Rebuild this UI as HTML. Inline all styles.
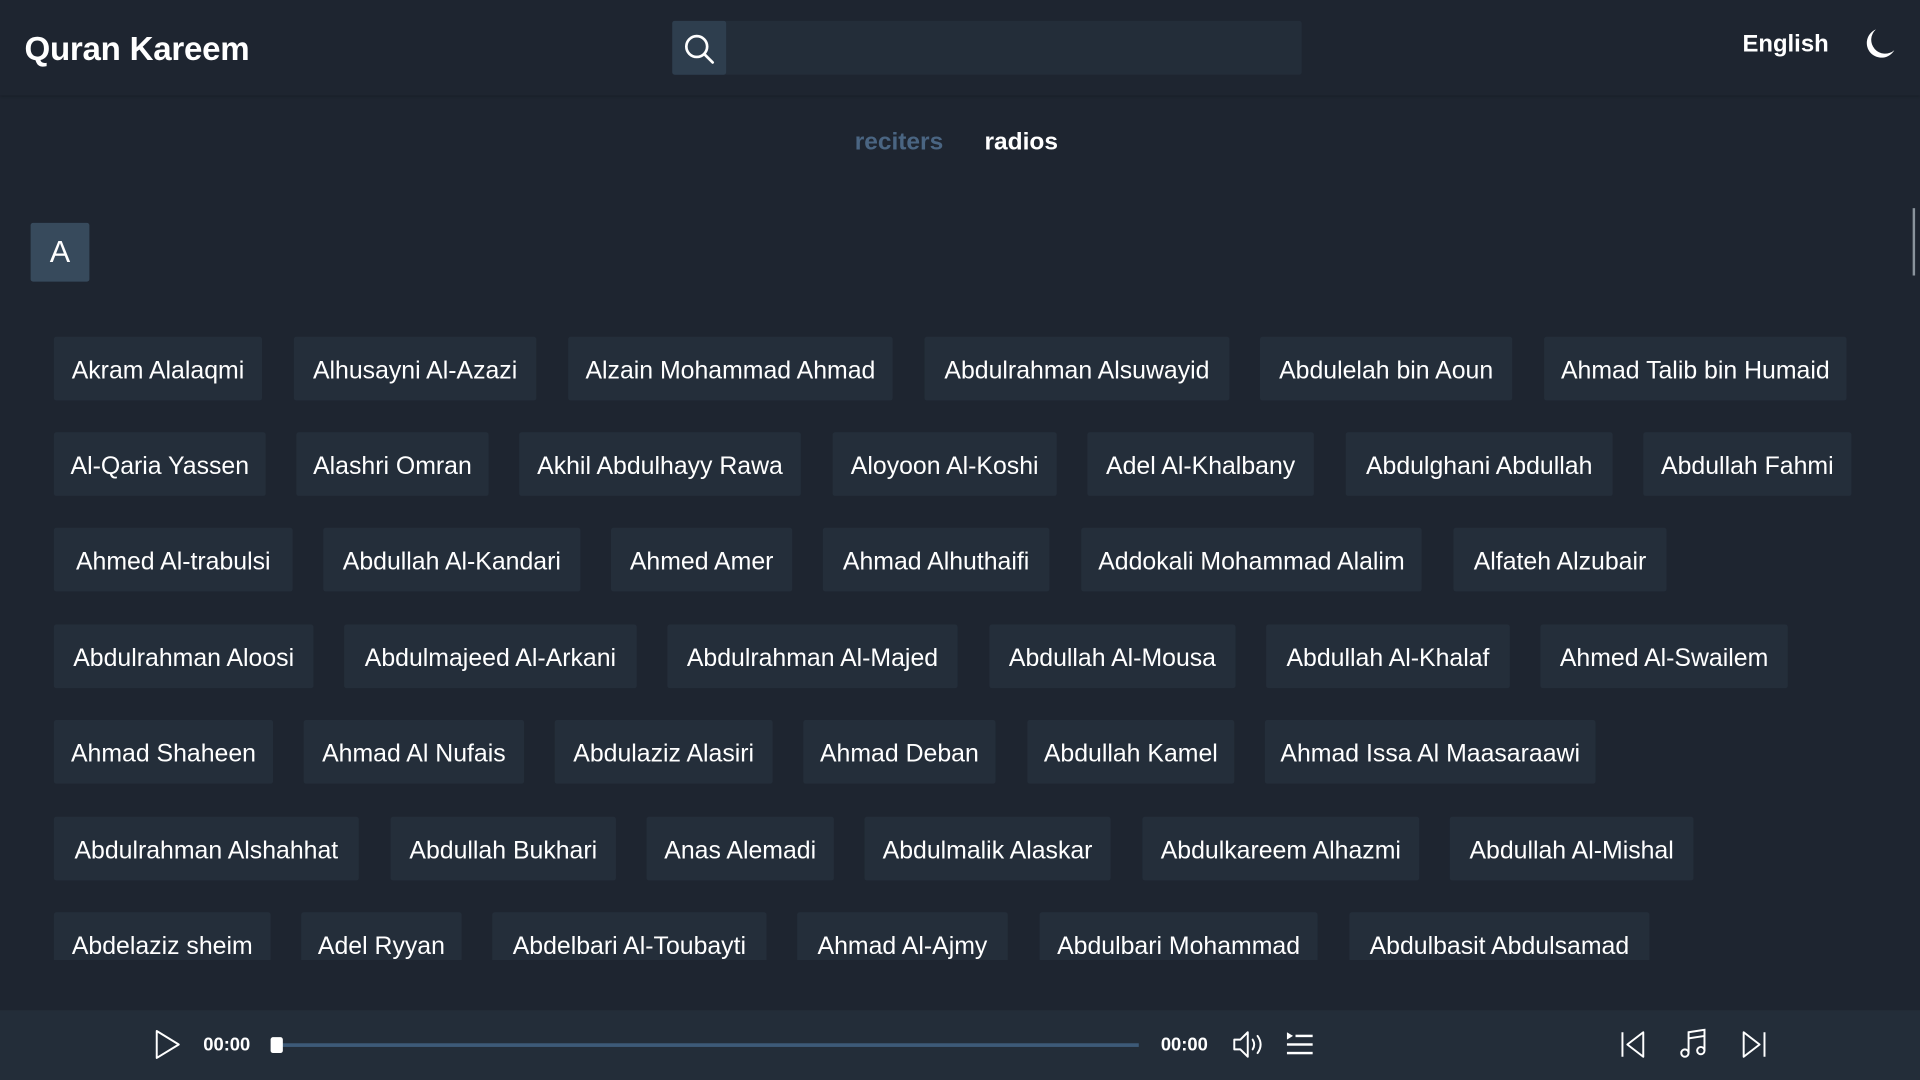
<!DOCTYPE html>
<html><head><meta charset="utf-8">
<style>
*{margin:0;padding:0;box-sizing:border-box}
html,body{width:1920px;height:1080px;overflow:hidden;background:#1e2530;font-family:"Liberation Sans",sans-serif;color:#fff}
#s{position:absolute;left:0;top:0;width:1568px;height:882px;transform:scale(1.22449);transform-origin:0 0;background:#1e2530}
.hdr{position:absolute;left:0;top:0;width:1568px;height:78px;background:#1e2530;box-shadow:0 1px 2px rgba(0,0,0,.25)}
.title{position:absolute;left:20px;top:25px;font-size:27px;font-weight:bold;letter-spacing:-.2px}
.sbox{position:absolute;left:549px;top:17px;width:514px;height:44px;background:#232d39;border-radius:2px}
.sicon{position:absolute;left:549px;top:17px;width:44px;height:44px;background:#2e3e4e;border-radius:2px}
.eng{position:absolute;left:1423px;top:25px;font-size:19.5px;font-weight:bold}
.tab{position:absolute;top:105px;font-size:20px;font-weight:bold}
.letter{position:absolute;left:25px;top:182px;width:48px;height:48px;background:#374a5c;border-radius:2px;font-size:25px;text-align:center;line-height:49px}
.sb{position:absolute;left:1562px;top:170px;width:2px;height:55px;background:#8a939c}
.clip{position:absolute;left:0;top:260px;width:1568px;height:524px;overflow:hidden}
.c{position:absolute;height:52px;background:#242e3a;border-radius:2px;font-size:20.3px;line-height:56px;text-align:center;white-space:nowrap}
.pl{position:absolute;left:0;top:825px;width:1568px;height:57px;background:#232d39}
.t{position:absolute;top:845px;font-size:15px;font-weight:bold}
.bar{position:absolute;left:226px;top:852px;width:704px;height:3px;background:#3d5a78}
.th{position:absolute;left:221px;top:847px;width:10px;height:13px;background:#fff;border-radius:2px}
svg{position:absolute}
</style></head><body><div id="s">
<div class="hdr"></div>
<div class="title">Quran Kareem</div>
<div class="sbox"></div><div class="sicon"></div>
<svg style="left:557px;top:26px" width="28" height="28" viewBox="0 0 28 28" fill="none" stroke="#fff" stroke-width="2.2" stroke-linecap="round"><circle cx="12" cy="12" r="8.5"/><line x1="18.5" y1="18.5" x2="25" y2="25"/></svg>
<div class="eng">English</div>
<svg style="left:1519px;top:21px" width="30" height="30" viewBox="0 0 30 30"><path d="M13 3 A12 12 0 1 0 28 20 A10 10 0 0 1 13 3Z" fill="#fff"/></svg>
<div class="tab" style="left:698px;color:#4a6582">reciters</div>
<div class="tab" style="left:804px">radios</div>
<div class="letter">A</div>
<div class="sb"></div>
<div class="clip">
<div class="c" style="top:15px;left:44px;width:170px">Akram Alalaqmi</div>
<div class="c" style="top:15px;left:240px;width:198px">Alhusayni Al-Azazi</div>
<div class="c" style="top:15px;left:464px;width:265px">Alzain Mohammad Ahmad</div>
<div class="c" style="top:15px;left:755px;width:249px">Abdulrahman Alsuwayid</div>
<div class="c" style="top:15px;left:1029px;width:206px">Abdulelah bin Aoun</div>
<div class="c" style="top:15px;left:1261px;width:247px">Ahmad Talib bin Humaid</div>

<div class="c" style="top:93px;left:44px;width:173px">Al-Qaria Yassen</div>
<div class="c" style="top:93px;left:242px;width:157px">Alashri Omran</div>
<div class="c" style="top:93px;left:424px;width:230px">Akhil Abdulhayy Rawa</div>
<div class="c" style="top:93px;left:680px;width:183px">Aloyoon Al-Koshi</div>
<div class="c" style="top:93px;left:888px;width:185px">Adel Al-Khalbany</div>
<div class="c" style="top:93px;left:1099px;width:218px">Abdulghani Abdullah</div>
<div class="c" style="top:93px;left:1342px;width:170px">Abdullah Fahmi</div>

<div class="c" style="top:171px;left:44px;width:195px">Ahmed Al-trabulsi</div>
<div class="c" style="top:171px;left:264px;width:210px">Abdullah Al-Kandari</div>
<div class="c" style="top:171px;left:499px;width:148px">Ahmed Amer</div>
<div class="c" style="top:171px;left:672px;width:185px">Ahmad Alhuthaifi</div>
<div class="c" style="top:171px;left:883px;width:278px">Addokali Mohammad Alalim</div>
<div class="c" style="top:171px;left:1187px;width:174px">Alfateh Alzubair</div>

<div class="c" style="top:250px;left:44px;width:212px">Abdulrahman Aloosi</div>
<div class="c" style="top:250px;left:281px;width:239px">Abdulmajeed Al-Arkani</div>
<div class="c" style="top:250px;left:545px;width:237px">Abdulrahman Al-Majed</div>
<div class="c" style="top:250px;left:808px;width:201px">Abdullah Al-Mousa</div>
<div class="c" style="top:250px;left:1034px;width:199px">Abdullah Al-Khalaf</div>
<div class="c" style="top:250px;left:1258px;width:202px">Ahmed Al-Swailem</div>

<div class="c" style="top:328px;left:44px;width:179px">Ahmad Shaheen</div>
<div class="c" style="top:328px;left:248px;width:180px">Ahmad Al Nufais</div>
<div class="c" style="top:328px;left:453px;width:178px">Abdulaziz Alasiri</div>
<div class="c" style="top:328px;left:656px;width:157px">Ahmad Deban</div>
<div class="c" style="top:328px;left:839px;width:169px">Abdullah Kamel</div>
<div class="c" style="top:328px;left:1033px;width:270px">Ahmad Issa Al Maasaraawi</div>

<div class="c" style="top:407px;left:44px;width:249px">Abdulrahman Alshahhat</div>
<div class="c" style="top:407px;left:319px;width:184px">Abdullah Bukhari</div>
<div class="c" style="top:407px;left:528px;width:153px">Anas Alemadi</div>
<div class="c" style="top:407px;left:706px;width:201px">Abdulmalik Alaskar</div>
<div class="c" style="top:407px;left:933px;width:226px">Abdulkareem Alhazmi</div>
<div class="c" style="top:407px;left:1184px;width:199px">Abdullah Al-Mishal</div>

<div class="c" style="top:485px;left:44px;width:177px">Abdelaziz sheim</div>
<div class="c" style="top:485px;left:246px;width:131px">Adel Ryyan</div>
<div class="c" style="top:485px;left:402px;width:224px">Abdelbari Al-Toubayti</div>
<div class="c" style="top:485px;left:651px;width:172px">Ahmad Al-Ajmy</div>
<div class="c" style="top:485px;left:849px;width:227px">Abdulbari Mohammad</div>
<div class="c" style="top:485px;left:1102px;width:245px">Abdulbasit Abdulsamad</div>
</div>
<div class="pl"></div>
<svg style="left:124px;top:840px" width="26" height="26" viewBox="0 0 26 26" fill="none" stroke="#fff" stroke-width="1.6" stroke-linejoin="round"><path d="M4 2 L22 13 L4 24 Z"/></svg>
<div class="t" style="left:166px">00:00</div>
<div class="bar"></div><div class="th"></div>
<div class="t" style="left:948px">00:00</div>
<svg style="left:1006px;top:840px" width="28" height="26" viewBox="0 0 28 26" fill="none" stroke="#fff" stroke-width="1.6" stroke-linejoin="round" stroke-linecap="round"><path d="M2 9 H7 L13 3 V23 L7 17 H2 Z"/><path d="M17 9 Q19.5 13 17 17"/><path d="M21 6 Q26 13 21 20"/></svg>
<svg style="left:1050px;top:842px" width="24" height="22" viewBox="0 0 24 22" fill="#fff"><path d="M1 1 L6 4 L1 7Z"/><rect x="8" y="3" width="14" height="2"/><rect x="1" y="10" width="21" height="2"/><rect x="1" y="17" width="21" height="2"/></svg>
<svg style="left:1322px;top:841px" width="24" height="24" viewBox="0 0 24 24" fill="none" stroke="#fff" stroke-width="1.6" stroke-linejoin="round"><line x1="3" y1="2" x2="3" y2="22"/><path d="M20 2 L7 12 L20 22 Z"/></svg>
<svg style="left:1371px;top:840px" width="24" height="26" viewBox="0 0 24 26" fill="none" stroke="#fff" stroke-width="1.6"><path d="M8 20 V3 L21 1 V18"/><circle cx="5" cy="20" r="3"/><circle cx="18" cy="18" r="3"/><line x1="8" y1="8" x2="21" y2="6"/></svg>
<svg style="left:1420px;top:841px" width="24" height="24" viewBox="0 0 24 24" fill="none" stroke="#fff" stroke-width="1.6" stroke-linejoin="round"><line x1="21" y1="2" x2="21" y2="22"/><path d="M4 2 L17 12 L4 22 Z"/></svg>
</div></body></html>
